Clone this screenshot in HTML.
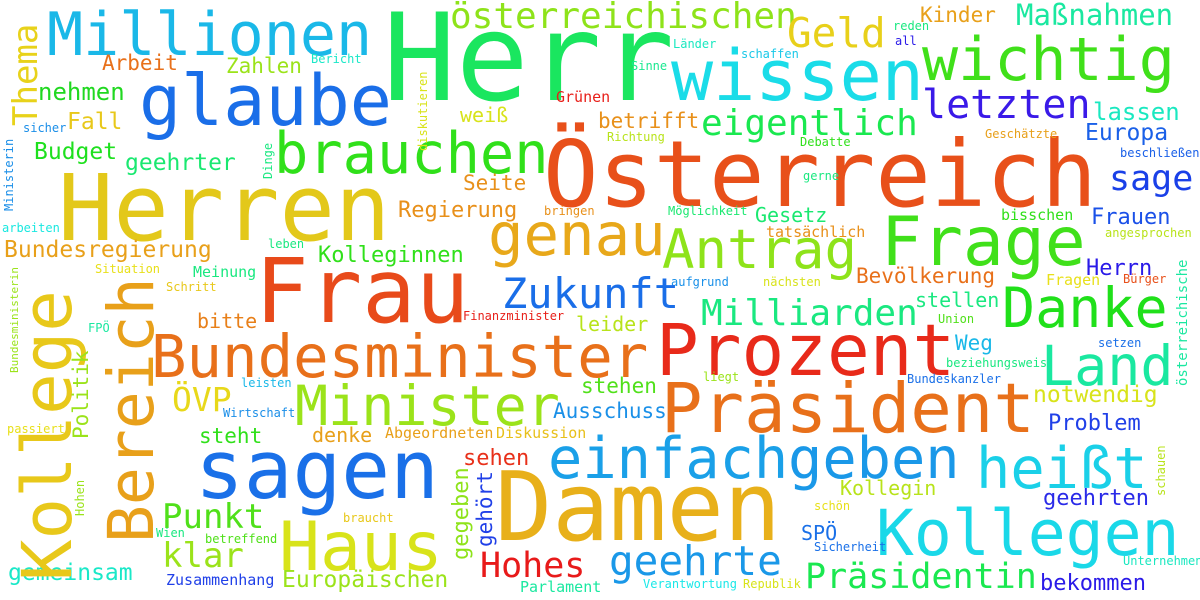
<!DOCTYPE html>
<html><head><meta charset="utf-8"><style>
html,body{margin:0;padding:0;background:#fff;width:1200px;height:600px;overflow:hidden}
svg text{font-family:"DejaVu Sans Mono","Liberation Mono",monospace}
</style></head><body>
<svg width="1200" height="600" xmlns="http://www.w3.org/2000/svg">
<rect width="1200" height="600" fill="#fff"/>
<g>
<text x="383" y="100" font-size="121" fill="#1ae65f">Herr</text>
<text x="47" y="55" font-size="60" fill="#1ab8e8">Millionen</text>
<text x="102" y="70" font-size="21" fill="#e8701a">Arbeit</text>
<text x="226" y="73" font-size="21" fill="#9be31a">Zahlen</text>
<text x="311" y="63" font-size="12" fill="#1ae8c8">Bericht</text>
<text x="139" y="125" font-size="70" fill="#1a6ee8">glaube</text>
<text x="38" y="100" font-size="24" fill="#20d820">nehmen</text>
<text x="67" y="129" font-size="23" fill="#e8c81a">Fall</text>
<text x="23" y="132" font-size="12" fill="#1a8ee8">sicher</text>
<text x="34" y="159" font-size="23" fill="#1ee01e">Budget</text>
<text x="125" y="170" font-size="23" fill="#1ae870">geehrter</text>
<text x="274" y="173" font-size="57" fill="#30e01a">brauchen</text>
<text x="58" y="240" font-size="92" fill="#e3c81a">Herren</text>
<text x="2" y="232" font-size="12" fill="#1ae8e0">arbeiten</text>
<text x="4" y="257" font-size="23" fill="#e8a01a">Bundesregierung</text>
<text x="268" y="248" font-size="12" fill="#1ae880">leben</text>
<text x="318" y="262" font-size="22" fill="#30e01a">Kolleginnen</text>
<text x="95" y="273" font-size="12" fill="#e8e01a">Situation</text>
<text x="193" y="277" font-size="15" fill="#1ae880">Meinung</text>
<text x="166" y="291" font-size="12" fill="#e8c81a">Schritt</text>
<text x="255" y="322" font-size="89" fill="#e84a1a">Frau</text>
<text x="88" y="332" font-size="12" fill="#1ae8a0">FPÖ</text>
<text x="197" y="328" font-size="20" fill="#e8801a">bitte</text>
<text x="151" y="377" font-size="59" fill="#e8701a">Bundesminister</text>
<text x="172" y="411" font-size="33" fill="#e8d81a">ÖVP</text>
<text x="241" y="387" font-size="12" fill="#1ab8e8">leisten</text>
<text x="223" y="417" font-size="12" fill="#1a8ee8">Wirtschaft</text>
<text x="295" y="425" font-size="55" fill="#9be31a">Minister</text>
<text x="7" y="433" font-size="12" fill="#e8e01a">passiert</text>
<text x="199" y="443" font-size="21" fill="#30e01a">steht</text>
<text x="312" y="442" font-size="20" fill="#e8a01a">denke</text>
<text x="385" y="438" font-size="15" fill="#e8a01a">Abgeordneten</text>
<text x="496" y="438" font-size="15" fill="#e8c01a">Diskussion</text>
<text x="195" y="498" font-size="81" fill="#1a70e8">sagen</text>
<text x="162" y="528" font-size="34" fill="#50e01a">Punkt</text>
<text x="343" y="522" font-size="12" fill="#e8c81a">braucht</text>
<text x="156" y="537" font-size="12" fill="#1ae880">Wien</text>
<text x="205" y="543" font-size="12" fill="#50e01a">betreffend</text>
<text x="279" y="570" font-size="68" fill="#d8e31a">Haus</text>
<text x="162" y="567" font-size="34" fill="#9be31a">klar</text>
<text x="8" y="580" font-size="23" fill="#1ae8c8">gemeinsam</text>
<text x="166" y="585" font-size="15" fill="#2040e8">Zusammenhang</text>
<text x="282" y="587" font-size="23" fill="#9be31a">Europäischen</text>

<text x="450" y="28" font-size="36" fill="#8ee31a">österreichischen</text>
<text x="787" y="47" font-size="41" fill="#e8d01a">Geld</text>
<text x="671" y="100" font-size="70" fill="#1adce8">wissen</text>
<text x="673" y="48" font-size="12" fill="#1ae8c0">Länder</text>
<text x="741" y="58" font-size="12" fill="#1ac8e8">schaffen</text>
<text x="631" y="70" font-size="12" fill="#1ae890">Sinne</text>
<text x="556" y="102" font-size="15" fill="#e8201a">Grünen</text>
<text x="460" y="122" font-size="20" fill="#d8e31a">weiß</text>
<text x="598" y="128" font-size="21" fill="#e8901a">betrifft</text>
<text x="701" y="135" font-size="36" fill="#1ae850">eigentlich</text>
<text x="607" y="141" font-size="12" fill="#b8e31a">Richtung</text>
<text x="543" y="206" font-size="92" fill="#e8501a">Österreich</text>
<text x="463" y="190" font-size="21" fill="#e8901a">Seite</text>
<text x="398" y="217" font-size="22" fill="#e8901a">Regierung</text>
<text x="544" y="215" font-size="12" fill="#e8901a">bringen</text>
<text x="668" y="215" font-size="12" fill="#1ae870">Möglichkeit</text>
<text x="488" y="255" font-size="59" fill="#e8a81a">genau</text>
<text x="662" y="268" font-size="54" fill="#8ee31a">Antrag</text>
<text x="766" y="237" font-size="15" fill="#e8901a">tatsächlich</text>
<text x="755" y="222" font-size="20" fill="#1ae870">Gesetz</text>
<text x="671" y="286" font-size="12" fill="#1a90e8">aufgrund</text>
<text x="763" y="286" font-size="12" fill="#d8e31a">nächsten</text>
<text x="502" y="308" font-size="42" fill="#1a6ee8">Zukunft</text>
<text x="463" y="320" font-size="12" fill="#e8201a">Finanzminister</text>
<text x="576" y="331" font-size="20" fill="#b8e31a">leider</text>
<text x="701" y="325" font-size="36" fill="#1ae880">Milliarden</text>
<text x="656" y="375" font-size="71" fill="#e82a1a">Prozent</text>
<text x="581" y="393" font-size="21" fill="#50e01a">stehen</text>
<text x="553" y="418" font-size="21" fill="#1a90e8">Ausschuss</text>
<text x="661" y="432" font-size="69" fill="#e8701a">Präsident</text>
<text x="703" y="381" font-size="12" fill="#9be31a">liegt</text>
<text x="548" y="478" font-size="57" fill="#1aa0e8">einfach</text>
<text x="788" y="478" font-size="57" fill="#1a98e8">geben</text>
<text x="463" y="465" font-size="22" fill="#e8301a">sehen</text>
<text x="495" y="540" font-size="95" fill="#e8b01a">Damen</text>
<text x="480" y="577" font-size="35" fill="#e81a1a">Hohes</text>
<text x="609" y="575" font-size="41" fill="#1a98e8">geehrte</text>
<text x="520" y="592" font-size="15" fill="#1ae8a0">Parlament</text>
<text x="643" y="588" font-size="12" fill="#1ae8e8">Verantwortung</text>
<text x="743" y="588" font-size="12" fill="#d8e31a">Republik</text>

<text x="920" y="22" font-size="21" fill="#e8a01a">Kinder</text>
<text x="1016" y="25" font-size="29" fill="#1ae8a0">Maßnahmen</text>
<text x="893" y="30" font-size="12" fill="#1ae880">reden</text>
<text x="895" y="45" font-size="12" fill="#2a1ae8">all</text>
<text x="922" y="80" font-size="60" fill="#40e01a">wichtig</text>
<text x="922" y="118" font-size="40" fill="#3a1ae8">letzten</text>
<text x="1093" y="120" font-size="24" fill="#1ae8c0">lassen</text>
<text x="1085" y="140" font-size="23" fill="#1a60e8">Europa</text>
<text x="800" y="146" font-size="12" fill="#30e01a">Debatte</text>
<text x="985" y="138" font-size="12" fill="#e8a01a">Geschätzte</text>
<text x="1120" y="157" font-size="12" fill="#1a60e8">beschließen</text>
<text x="803" y="180" font-size="12" fill="#1ae880">gerne</text>
<text x="1109" y="190" font-size="35" fill="#1a40e8">sage</text>
<text x="881" y="265" font-size="68" fill="#40e01a">Frage</text>
<text x="1001" y="220" font-size="15" fill="#30e01a">bisschen</text>
<text x="1091" y="224" font-size="22" fill="#1a50e8">Frauen</text>
<text x="1105" y="237" font-size="12" fill="#b8e31a">angesprochen</text>
<text x="856" y="283" font-size="21" fill="#e8701a">Bevölkerung</text>
<text x="1086" y="275" font-size="22" fill="#2a1ae8">Herrn</text>
<text x="1046" y="285" font-size="15" fill="#e8e01a">Fragen</text>
<text x="1123" y="283" font-size="12" fill="#e8501a">Bürger</text>

<text x="1002" y="327" font-size="55" fill="#20e01a">Danke</text>
<text x="915" y="307" font-size="20" fill="#1ae880">stellen</text>
<text x="938" y="323" font-size="12" fill="#50e01a">Union</text>
<text x="955" y="350" font-size="21" fill="#1ab8e8">Weg</text>
<text x="1041" y="385" font-size="55" fill="#1ae8a0">Land</text>
<text x="1098" y="347" font-size="12" fill="#1a70e8">setzen</text>
<text x="946" y="367" font-size="12" fill="#1ae880">beziehungsweis</text>
<text x="907" y="383" font-size="12" fill="#1a70e8">Bundeskanzler</text>
<text x="1033" y="402" font-size="23" fill="#d8e31a">notwendig</text>
<text x="1048" y="430" font-size="22" fill="#2040e8">Problem</text>
<text x="976" y="488" font-size="57" fill="#1ad0e8">heißt</text>
<text x="840" y="495" font-size="20" fill="#b8e31a">Kollegin</text>
<text x="1043" y="505" font-size="22" fill="#2a2ae8">geehrten</text>
<text x="814" y="510" font-size="12" fill="#e8e01a">schön</text>
<text x="876" y="555" font-size="63" fill="#1ad8e8">Kollegen</text>
<text x="801" y="540" font-size="20" fill="#1a70e8">SPÖ</text>
<text x="814" y="551" font-size="12" fill="#1a70e8">Sicherheit</text>
<text x="805" y="588" font-size="35" fill="#1ae850">Präsidentin</text>
<text x="1040" y="590" font-size="22" fill="#2a1ae8">bekommen</text>
<text x="1123" y="565" font-size="12" fill="#1ae8c0">Unternehmen</text>

<text transform="translate(37,126) rotate(-90)" font-size="34" fill="#e8d21a">Thema</text>
<text transform="translate(13,211) rotate(-90)" font-size="12" fill="#1a8ee8">Ministerin</text>
<text transform="translate(272,179) rotate(-90)" font-size="12" fill="#1ae880">Dinge</text>
<text transform="translate(427,151) rotate(-90)" font-size="12" fill="#d8e31a">diskutieren</text>
<text transform="translate(71,581) rotate(-90)" font-size="69" fill="#e8c81a">Kollege</text>
<text transform="translate(153,543) rotate(-90)" font-size="63" fill="#e8a01a">Bereich</text>
<text transform="translate(18,373) rotate(-90)" font-size="11" fill="#9be31a">Bundesministerin</text>
<text transform="translate(88,439) rotate(-90)" font-size="21" fill="#9be31a">Politik</text>
<text transform="translate(84,516) rotate(-90)" font-size="12" fill="#9be31a">Hohen</text>
<text transform="translate(468,560) rotate(-90)" font-size="22" fill="#8ee31a">gegeben</text>
<text transform="translate(492,547) rotate(-90)" font-size="21" fill="#2040e8">gehört</text>
<text transform="translate(1187,386) rotate(-90)" font-size="14" fill="#1ae8a0">österreichische</text>
<text transform="translate(1165,496) rotate(-90)" font-size="12" fill="#b8e31a">schauen</text>
</g>
</svg>
</body></html>
